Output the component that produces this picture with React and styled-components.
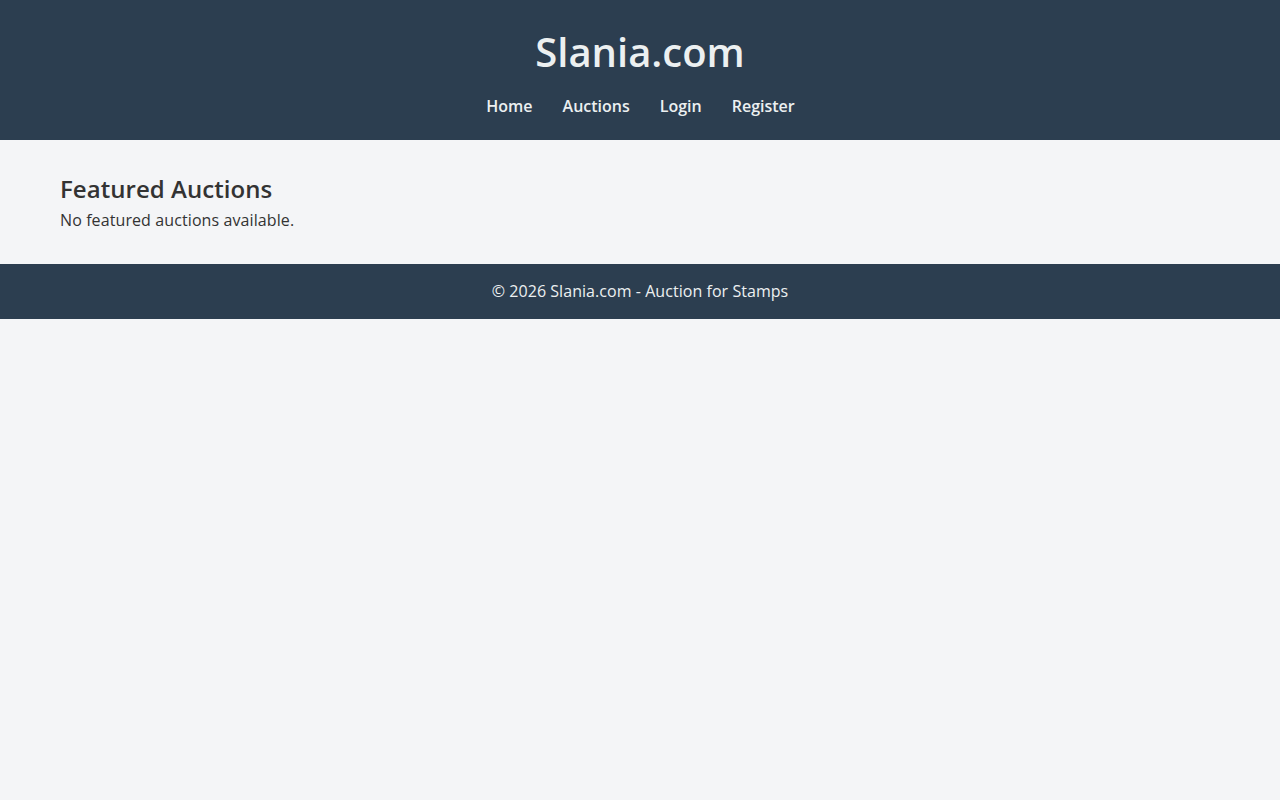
import React from "react";
import styled, { createGlobalStyle } from "styled-components";

const Global = createGlobalStyle`
  html, body { margin: 0; padding: 0; background: #f4f5f7; }
  body { font-family: "Open Sans", "Noto Sans", sans-serif; color: #333; }
`;

const Header = styled.header`
  background: #2c3e50;
  color: #ecf0f1;
  padding: 28px 0 22px;
  text-align: center;
`;

const Title = styled.h1`
  margin: 0 0 18px;
  font-size: 40px;
  line-height: 48px;
  font-weight: 600;
`;

const Nav = styled.nav`
  display: flex;
  justify-content: center;
  gap: 30px;
  padding-left: 1px;
`;

const NavLink = styled.a`
  color: #ecf0f1;
  text-decoration: none;
  font-size: 16px;
  line-height: 24px;
  font-weight: 600;
`;

const Main = styled.main`
  padding: 34px 60px 32px;
`;

const SectionTitle = styled.h2`
  margin: 0 0 5px;
  font-size: 24px;
  line-height: 29px;
  font-weight: 600;
  color: #333;
  letter-spacing: 0.05px;
`;

const Text = styled.p`
  margin: 0;
  font-size: 16px;
  line-height: 24px;
  color: #333;
  letter-spacing: 0.1px;
`;

const Footer = styled.footer`
  background: #2c3e50;
  color: #ecf0f1;
  text-align: center;
  padding: 15px 0 16px;
  font-size: 16px;
  line-height: 24px;
  letter-spacing: 0.05px;
`;

export default function App() {
  return (
    <>
      <Global />
      <Header>
        <Title>Slania.com</Title>
        <Nav>
          <NavLink href="#">Home</NavLink>
          <NavLink href="#">Auctions</NavLink>
          <NavLink href="#">Login</NavLink>
          <NavLink href="#">Register</NavLink>
        </Nav>
      </Header>
      <Main>
        <SectionTitle>Featured Auctions</SectionTitle>
        <Text>No featured auctions available.</Text>
      </Main>
      <Footer>© 2026 Slania.com - Auction for Stamps</Footer>
    </>
  );
}
